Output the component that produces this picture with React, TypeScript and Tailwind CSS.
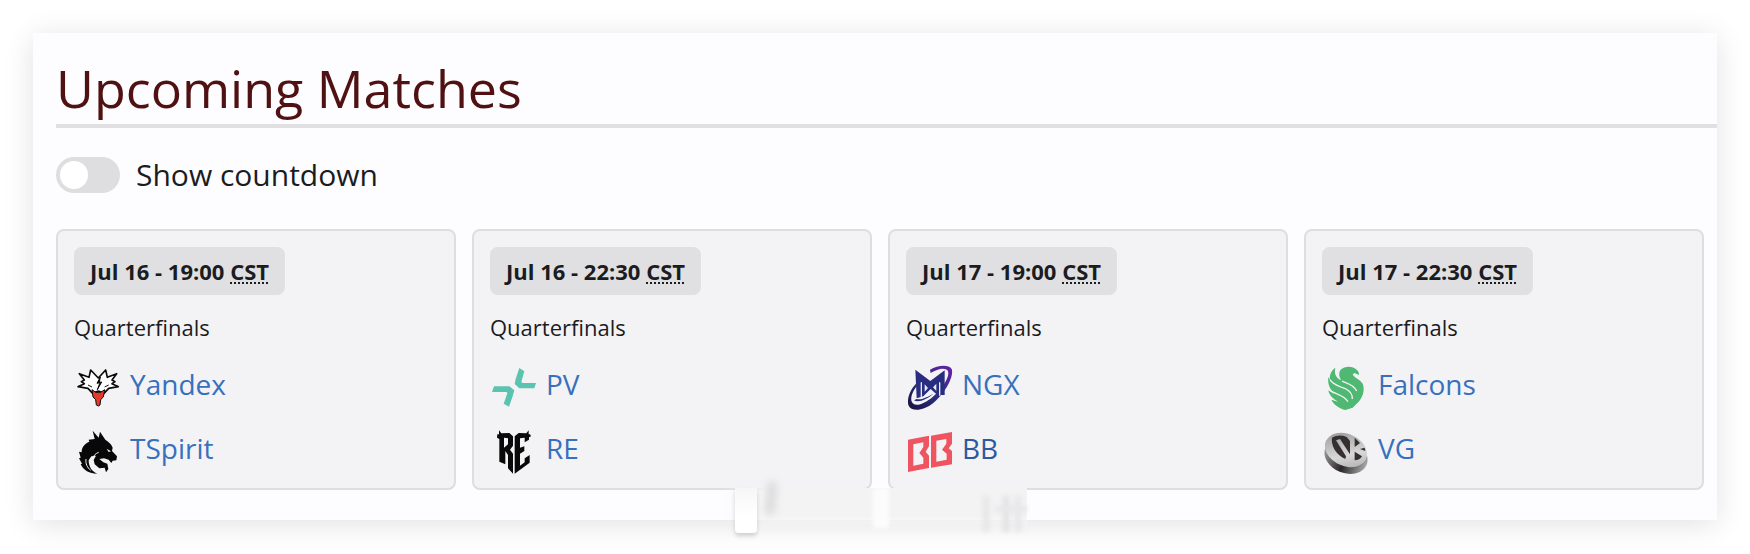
import type { ReactNode } from "react";

const Logo = ({ viewBox, children }: { viewBox: string; children: ReactNode }) => (
  <svg viewBox={viewBox} className="h-[52px] w-[50px] shrink-0 overflow-visible" aria-hidden="true">
    {children}
  </svg>
);

const YandexLogo = () => (
  <Logo viewBox="42 27 150 156">
    <path
      d="M54 113L73 104L64 98L73 93L58 74L87 85L92 63L115 87L137 63L142 85L170 74L156 93L165 98L156 104L175 113L146 118L132 133L115 126L98 133L84 118Z"
      fill="#fff"
      stroke="#0b0b0b"
      strokeWidth="5"
      strokeLinejoin="round"
    />
    <path d="M121 84L111 103L120 101L112 122L125 99L118 100Z" fill="#0b0b0b" stroke="#0b0b0b" strokeWidth="3" />
    <path d="M84 108L96 114M146 108L134 114" fill="none" stroke="#0b0b0b" strokeWidth="3" />
    <path
      d="M96 122L107 130H122L134 122L130 144L122 152L120 168L115 171L109 168L107 152L99 144Z"
      fill="#e23b2a"
      stroke="#0b0b0b"
      strokeWidth="3"
    />
  </Logo>
);

const SpiritLogo = () => (
  <Logo viewBox="42 219 150 156">
    <path
      d="M98 245L116 266L120 248L136 272C144 278 154 284 158 296L156 306L171 322L169 334L158 335L154 342L146 332L132 328L118 330L130 340L142 344L145 360L138 370L134 356L118 358L104 346L101 333L108 320L94 322L86 334C86 354 96 368 112 374C88 374 70 364 62 346L66 344L57 328L62 326L57 308L65 310C64 296 74 284 88 278L86 272L104 270Z"
      fill="#080808"
    />
    <path d="M140 299L153 307L146 309Z" fill="#f3f3f5" />
    <path d="M78 330C76 344 82 356 92 364M116 310C106 314 100 320 98 330" fill="none" stroke="#f3f3f5" strokeWidth="3" />
  </Logo>
);

const PvLogo = () => (
  <Logo viewBox="30 27 150 156">
    <path d="M118 57L133 67L124 98L127 102H168L163 118H118L104 105L107 90Z" fill="#5bc4b0" />
    <path d="M42 112H88L103 124L98 142L87 173L71 164L82 133L80 129H36Z" fill="#5bc4b0" />
  </Logo>
);

const ReLogo = () => (
  <Logo viewBox="30 219 150 156">
    <path
      d="M57 244L64 253L88 252L99 262V290L90 302L99 314V374L84 358V318L76 306V346L58 338V270L51 266L52 256H57ZM72 266V296L84 286V268Z"
      fill="#090909"
      fillRule="evenodd"
    />
    <path
      d="M146 244L139 253L116 252L104 262V374L149 341V318L134 328V340L120 350V314L133 306V292L120 296V268L134 266V280L147 272V265L153 262L150 256H146Z"
      fill="#090909"
    />
  </Logo>
);

const NgxLogo = () => (
  <Logo viewBox="48 27 150 156">
    <defs>
      <linearGradient id="ngx" x1="0" y1="1" x2="1" y2="0">
        <stop offset="0" stopColor="#17123c" />
        <stop offset="0.5" stopColor="#2c2f86" />
        <stop offset="1" stopColor="#6a20a8" />
      </linearGradient>
    </defs>
    <path
      d="M120 62C144 48 176 46 185 60C193 80 168 130 130 162C100 186 64 190 55 168C50 146 62 120 78 104L80 112C66 130 60 148 66 160C76 176 104 164 128 144C160 116 180 82 174 66C166 54 144 58 122 72Z"
      fill="url(#ngx)"
    />
    <path d="M76 62L121 96L164 64V138H142L122 120L100 142L80 148Z" fill="#282d80" />
    <path d="M94 100V144M149 100V140" fill="none" stroke="#e9e9f5" strokeWidth="4" />
    <path d="M104 106V128L114 117ZM139 104V126L129 115Z" fill="#e9e9f5" />
    <path d="M72 154C86 162 112 150 130 134C114 144 92 154 80 150Z" fill="#252b78" />
  </Logo>
);

const BbLogo = () => (
  <Logo viewBox="48 219 150 156">
    <path
      d="M54 272L117 260V292L107 308L117 320V357L54 369ZM70 286V350L100 344V326L88 312L100 294V280Z"
      fill="#ee5560"
      fillRule="evenodd"
    />
    <path
      d="M123 260L186 249V284L176 298L186 306V346L123 356ZM139 275V338L170 332V314L156 302L169 284V270Z"
      fill="#ee5560"
      fillRule="evenodd"
    />
  </Logo>
);

const FalconsLogo = () => (
  <Logo viewBox="36 27 150 156">
    <path
      d="M92 62C104 50 128 50 140 62C147 68 148 74 146 78L134 72L128 76C132 86 148 90 158 104C166 124 158 148 140 164L128 176L106 183C88 178 72 168 64 152L84 158C70 150 58 140 55 124L74 136C60 122 52 104 55 84L60 94C58 80 62 66 76 56C72 76 78 86 94 94C86 82 86 70 92 62Z"
      fill="#4fb873"
    />
    <path
      d="M60 92C70 110 92 112 108 120C122 128 128 138 127 150M60 124C80 138 100 136 114 158M96 96C108 104 128 104 140 126"
      fill="none"
      stroke="#f3f3f5"
      strokeWidth="4"
    />
  </Logo>
);

const VgLogo = () => (
  <Logo viewBox="36 219 150 156">
    <defs>
      <linearGradient id="vg-side" x1="0" y1="0" x2="1" y2="0">
        <stop offset="0" stopColor="#9a9a9a" />
        <stop offset="0.5" stopColor="#2a2627" />
        <stop offset="1" stopColor="#a8a8a8" />
      </linearGradient>
      <linearGradient id="vg-face" x1="0" y1="0" x2="1" y2="1">
        <stop offset="0" stopColor="#8f8f8f" />
        <stop offset="0.6" stopColor="#d8d8d8" />
        <stop offset="1" stopColor="#a5a5a5" />
      </linearGradient>
    </defs>
    <ellipse cx="108" cy="322" rx="67" ry="50" transform="rotate(22 108 322)" fill="url(#vg-side)" />
    <ellipse cx="108" cy="303" rx="66" ry="48" transform="rotate(24 108 303)" fill="url(#vg-face)" />
    <path d="M66 266C62 288 78 318 106 330L108 322L78 274L90 270L120 316V276L110 264C96 258 80 258 66 266Z" fill="#35302f" />
    <path d="M134 266L150 282L134 294ZM134 308L156 322C152 330 144 334 134 334ZM150 300L164 296L166 306Z" fill="#35302f" />
  </Logo>
);

type Team = { name: string; logo: () => ReactNode; visited?: boolean };
type Match = { id: number; time: string; teams: Team[] };

const matches: Match[] = [
  { id: 1, time: "Jul 16 - 19:00", teams: [{ name: "Yandex", logo: YandexLogo }, { name: "TSpirit", logo: SpiritLogo }] },
  { id: 2, time: "Jul 16 - 22:30", teams: [{ name: "PV", logo: PvLogo }, { name: "RE", logo: ReLogo }] },
  { id: 3, time: "Jul 17 - 19:00", teams: [{ name: "NGX", logo: NgxLogo }, { name: "BB", logo: BbLogo, visited: true }] },
  { id: 4, time: "Jul 17 - 22:30", teams: [{ name: "Falcons", logo: FalconsLogo }, { name: "VG", logo: VgLogo }] },
];

const MatchCard = ({ match }: { match: Match }) => (
  <article className="rounded-lg border-2 border-[#dedee0] bg-[#f3f3f5] px-4 pt-4 pb-2">
    <div className="inline-flex h-12 items-center rounded-lg bg-[#e0e0e2] px-4 text-[22px] font-bold">
      <time className="whitespace-pre">{match.time} </time>
      <abbr title="China Standard Time" className="underline decoration-dotted decoration-2 underline-offset-3">
        CST
      </abbr>
    </div>
    <p className="mt-4 mb-2 text-[22px] leading-[33px]">Quarterfinals</p>
    <ul>
      {match.teams.map(({ name, logo: TeamLogo, visited }) => (
        <li key={name} className="flex h-16 items-center gap-1.5">
          <TeamLogo />
          <a href="#" className={visited ? "text-[28px] text-[#2a5a9f]" : "text-[28px] text-[#3870bd]"}>
            {name}
          </a>
        </li>
      ))}
    </ul>
  </article>
);

// Faded watermark sitting on the bottom edge of the panel
const Watermark = () => (
  <div className="pointer-events-none absolute -bottom-3.5 left-1/2 h-[46px] w-[304px] -translate-x-1/2" aria-hidden="true">
    <div className="absolute inset-0 bg-linear-to-r from-transparent via-[#f3f3f4] via-15% to-[#f3f3f4] mask-b-from-60%" />
    <div className="absolute -top-1.5 left-[44px] h-8 w-2 rotate-6 bg-[#d6d6d8] blur-xs" />
    <div className="absolute top-0 left-[12px] h-[45px] w-[22px] rounded-b-sm bg-linear-to-b from-[#f6f6f7] to-white to-60% shadow-[0_3px_4px_rgba(0,0,0,0.16)]" />
    <div className="absolute top-0 left-[150px] h-10 w-4 bg-[#fcfcfd] blur-[2px]" />
    <div className="absolute top-2 right-[38px] h-9 w-1.5 bg-[#e6e6e8] blur-[2px]" />
    <div className="absolute top-2 right-[18px] h-9 w-1.5 bg-[#e2e2e4] blur-[2px]" />
    <div className="absolute top-2 right-[6px] h-9 w-1.5 bg-[#e6e6e8] blur-[2px]" />
    <div className="absolute top-[18px] right-0 h-1.5 w-8 bg-[#e8e8ea] blur-[2px]" />
  </div>
);

const App = () => {
  return (
    <main className="bg-white p-[33px] font-['Open_Sans','Noto_Sans',sans-serif] text-[#1b1c1f]">
      <section className="relative bg-[#fdfdff] pt-[19px] pb-[30px] pl-[23px] shadow-[0_4px_28px_rgba(0,0,0,0.12)]">
        <h2 className="border-b-4 border-[#e0e0e2] text-[52px] leading-[72px] text-[#4f1111]">Upcoming Matches</h2>
        <label className="mt-[29px] flex h-9 w-fit cursor-pointer items-center gap-4 text-[30px]">
          <input
            type="checkbox"
            role="switch"
            className="h-9 w-16 appearance-none rounded-full bg-[#dedee0] p-1 before:block before:size-7 before:rounded-full before:bg-white checked:bg-[#3870bd] checked:before:translate-x-7"
          />
          <span className="pb-0.5">Show countdown</span>
        </label>
        <div className="mt-9 mr-[13px] grid grid-cols-4 gap-4">
          {matches.map((match) => (
            <MatchCard key={match.id} match={match} />
          ))}
        </div>
        <Watermark />
      </section>
    </main>
  );
};

export default App;
